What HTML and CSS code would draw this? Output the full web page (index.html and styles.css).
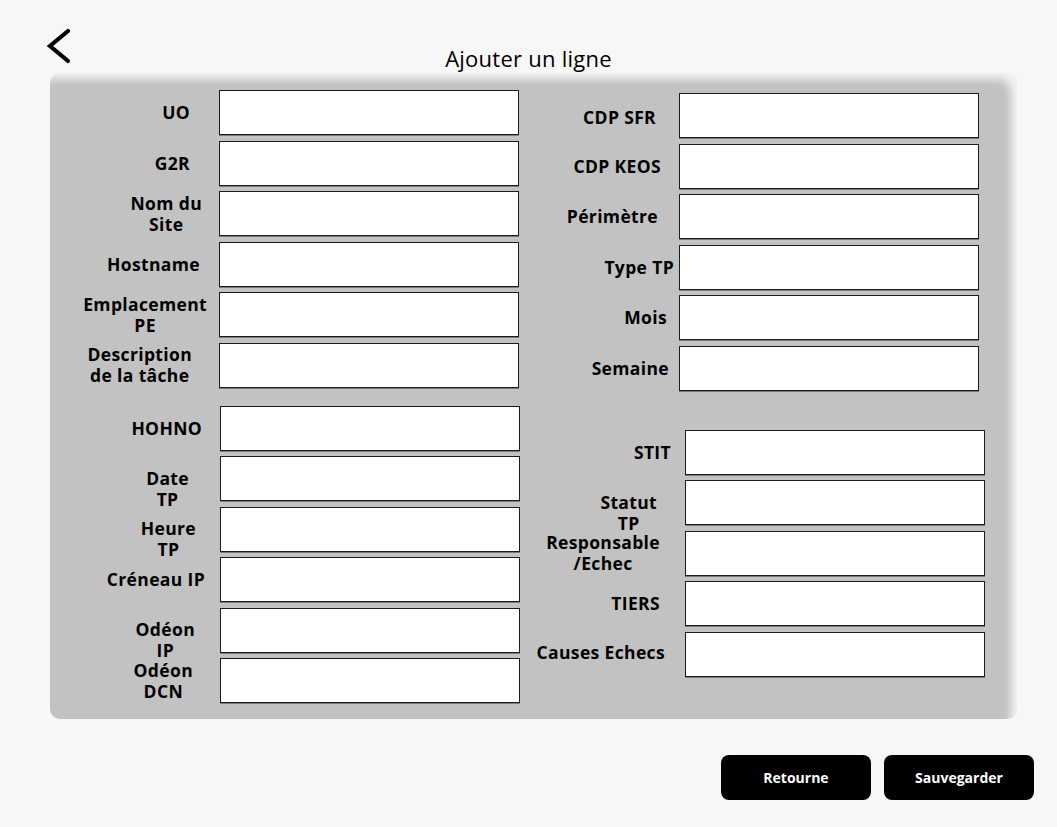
FILE: index.html
```html
<!DOCTYPE html>
<html lang="fr">
<head>
<meta charset="utf-8">
<title>Ajouter un ligne</title>
<link rel="stylesheet" href="styles.css">
</head>
<body>
<header class="header">
  <button class="back" aria-label="Retour">
    <svg width="26" height="36" viewBox="0 0 26 36"><path d="M22 3 L4 18 L22 33" fill="none" stroke="#000" stroke-width="4.2" stroke-linecap="round" stroke-linejoin="miter"/></svg>
  </button>
  <h1 class="title">Ajouter un ligne</h1>
  <div></div>
</header>

<main class="panel">
  <section class="col col-left">
    <div class="group g-l1">
      <div class="row"><span class="lbl gap29">UO</span><input class="field"></div>
      <div class="row"><span class="lbl gap29">G2R</span><input class="field"></div>
      <div class="row"><span class="lbl gap17">Nom du<br>Site</span><input class="field"></div>
      <div class="row"><span class="lbl gap19">Hostname</span><input class="field"></div>
      <div class="row"><span class="lbl gap12">Emplacement<br>PE</span><input class="field"></div>
      <div class="row"><span class="lbl gap27">Description<br>de la tâche</span><input class="field"></div>
    </div>
    <div class="group g-l2">
      <div class="row"><span class="lbl gap18">HOHNO</span><input class="field"></div>
      <div class="row"><span class="lbl gap31 low">Date<br>TP</span><input class="field"></div>
      <div class="row"><span class="lbl gap24 low">Heure<br>TP</span><input class="field"></div>
      <div class="row"><span class="lbl gap15">Créneau IP</span><input class="field"></div>
      <div class="row"><span class="lbl gap25 low">Odéon<br>IP</span><input class="field"></div>
      <div class="row"><span class="lbl gap27">Odéon<br>DCN</span><input class="field"></div>
    </div>
  </section>
  <section class="col col-right">
    <div class="group g-r1">
      <div class="row"><span class="lbl gap23 low4">CDP SFR</span><input class="field"></div>
      <div class="row"><span class="lbl gap18">CDP KEOS</span><input class="field"></div>
      <div class="row"><span class="lbl gap21">Périmètre</span><input class="field"></div>
      <div class="row"><span class="lbl gap5">Type TP</span><input class="field"></div>
      <div class="row"><span class="lbl gap12">Mois</span><input class="field"></div>
      <div class="row"><span class="lbl gap10">Semaine</span><input class="field"></div>
    </div>
    <div class="group g-r2">
      <div class="row"><span class="lbl gap14">STIT</span><input class="field"></div>
      <div class="row"><span class="lbl gap28 low">Statut<br>TP</span><input class="field"></div>
      <div class="row"><span class="lbl gap25">Responsable<br>/Echec</span><input class="field"></div>
      <div class="row"><span class="lbl gap25">TIERS</span><input class="field"></div>
      <div class="row"><span class="lbl gap20 high">Causes Echecs</span><input class="field"></div>
    </div>
  </section>
</main>

<footer class="actions">
  <button class="btn">Retourne</button>
  <button class="btn">Sauvegarder</button>
</footer>
</body>
</html>
```
FILE: styles.css
```css
* { box-sizing: border-box; }

body {
  margin: 0;
  background: #f7f7f7;
  font-family: "Open Sans", "Liberation Sans", sans-serif;
  color: #000;
  width: 1057px;
  height: 827px;
  overflow: hidden;
}

.header {
  display: grid;
  grid-template-columns: 1fr auto 1fr;
  height: 73px;
}

.back {
  justify-self: start;
  margin: 28px 0 0 46px;
  padding: 0;
  border: 0;
  background: none;
  width: 26px;
  height: 36px;
  display: block;
}
.back svg { display: block; }

.title {
  margin: 43px 0 0;
  font-size: 22px;
  font-weight: 400;
  line-height: 30px;
  letter-spacing: 0.25px;
}

.panel {
  margin-left: 50px;
  width: 967px;
  height: 646px;
  background: #c3c2c3;
  border-radius: 10px;
  box-shadow: inset -9px 9px 9px -3px rgba(247, 247, 247, 0.9);
  display: flex;
  padding-top: 17px;
}

.col { display: flex; flex-direction: column; }
.col-left { width: 470px; }
.col-right { width: 465px; padding-top: 3px; }

.group { display: flex; flex-direction: column; gap: 5.5px; }
.g-l1 { margin-right: 1px; }
.g-l2 { margin-top: 18px; }
.g-r1 { margin-right: 6px; }
.g-r2 { margin-top: 39px; }

.row {
  display: flex;
  align-items: center;
  justify-content: flex-end;
  height: 45px;
}

.lbl {
  font-weight: 700;
  font-size: 17.5px;
  letter-spacing: 0.35px;
  line-height: 21px;
  text-align: center;
  white-space: nowrap;
}
.low { padding-top: 20px; }
.low4 { padding-top: 3px; }
.high { padding-bottom: 4px; }

.gap5 { margin-right: 5px; }
.gap10 { margin-right: 10px; }
.gap12 { margin-right: 12px; }
.gap14 { margin-right: 14px; }
.gap15 { margin-right: 15px; }
.gap17 { margin-right: 17px; }
.gap18 { margin-right: 18px; }
.gap19 { margin-right: 19px; }
.gap20 { margin-right: 20px; }
.gap21 { margin-right: 21px; }
.gap23 { margin-right: 23px; }
.gap24 { margin-right: 24px; }
.gap25 { margin-right: 25px; }
.gap27 { margin-right: 27px; }
.gap28 { margin-right: 28px; }
.gap29 { margin-right: 29px; }
.gap31 { margin-right: 31px; }

.field {
  width: 300px;
  height: 45px;
  margin: 0;
  background: #fff;
  border: 1px solid #1c1c1c;
  box-shadow: 0 1px 0 #7b7b7b;
  border-radius: 0;
  padding: 0 6px;
  font: inherit;
}

.actions {
  display: flex;
  justify-content: flex-end;
  gap: 13px;
  margin-top: 36px;
  padding-right: 23px;
}

.btn {
  width: 150px;
  height: 45px;
  border: 0;
  border-radius: 8px;
  background: #000;
  color: #fff;
  font-family: "Open Sans", "Liberation Sans", sans-serif;
  font-weight: 700;
  font-size: 14px;
}
```
